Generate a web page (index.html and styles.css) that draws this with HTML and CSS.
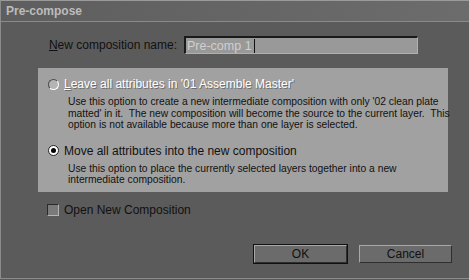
FILE: index.html
```html
<!DOCTYPE html>
<html lang="en">

<head>
    <meta charset="UTF-8">
    <title>Pre-compose</title>
    <link rel="stylesheet" href="styles.css">
</head>

<body>
    <div class="window">
        <div class="titlebar">Pre-compose</div>

        <div class="content">
            <div class="name-row">
                <label class="name-label"><u>N</u>ew composition name:</label>
                <div class="name-input">Pre-comp 1<span class="caret"></span></div>
            </div>

            <div class="panel">
                <div class="option">
                    <div class="option-head">
                        <span class="radio disabled"></span>
                        <span class="option-label disabled-text"><u>L</u>eave all attributes in '01 Assemble Master'</span>
                    </div>
                    <p class="option-desc">Use this option to create a new intermediate composition with only '02 clean plate<br>
                        matted' in it.&nbsp; The new composition will become the source to the current layer.&nbsp; This<br>
                        option is not available because more than one layer is selected.</p>
                </div>

                <div class="option second">
                    <div class="option-head">
                        <span class="radio checked"></span>
                        <span class="option-label">Move all attributes into the new composition</span>
                    </div>
                    <p class="option-desc">Use this option to place the currently selected layers together into a new<br>
                        intermediate composition.</p>
                </div>
            </div>

            <div class="check-row">
                <span class="checkbox"></span>
                <span class="check-label">Open New Composition</span>
            </div>

            <div class="buttons">
                <button class="btn default">OK</button>
                <button class="btn">Cancel</button>
            </div>
        </div>
    </div>
</body>

</html>
```

FILE: styles.css
```css
* {
    margin: 0;
    padding: 0;
    box-sizing: border-box;
    font-family: "Liberation Sans", Arial, sans-serif;
}

body {
    background-color: #5b5b5b;
    width: 469px;
    height: 280px;
    overflow: hidden;
}

.window {
    width: 469px;
    height: 279px;
    border-top: 1px solid #9a9a9a;
    border-left: 1px solid #8c8c8c;
    border-bottom: 1px solid #8c8c8c;
    background-color: #5b5b5b;
}

.titlebar {
    height: 21px;
    background: linear-gradient(to right, #5e5e5e, #6c6c6c);
    border-bottom: 1px solid #8a8a8a;
    color: #bcbcbc;
    font-weight: bold;
    font-size: 12px;
    padding-left: 5px;
    line-height: 20px;
}

.content {
    padding-top: 14px;
}

.name-row {
    display: flex;
    align-items: center;
    height: 18px;
}

.name-label {
    width: 178px;
    text-align: right;
    padding-right: 2px;
    font-size: 12px;
    color: #111;
}

.name-input {
    margin-left: 5px;
    width: 234px;
    height: 18px;
    background-color: #999;
    border-top: 2px solid #1a1a1a;
    border-left: 2px solid #1a1a1a;
    border-right: 1px solid #b0b0b0;
    border-bottom: 1px solid #b0b0b0;
    color: #cfcfcf;
    font-size: 12.5px;
    line-height: 14px;
    padding-left: 1px;
    display: flex;
    align-items: center;
}

.caret {
    display: inline-block;
    width: 1px;
    height: 14px;
    background-color: #111;
    margin-left: 2px;
}

.panel {
    margin-top: 14px;
    margin-left: 37px;
    width: 410px;
    height: 124px;
    background-color: #a1a1a1;
    padding: 10px 0 0 10px;
}

.option.second {
    margin-top: 14px;
}

.option-head {
    display: flex;
    align-items: center;
    height: 12px;
}

.option-label {
    margin-left: 5px;
    font-size: 12px;
    color: #111;
}

.disabled-text {
    color: #fff;
    text-shadow: 1px 1px 0 #6e6e6e;
}

.option-desc {
    margin-top: 6px;
    margin-left: 20px;
    white-space: nowrap;
    font-size: 10.3px;
    line-height: 11.5px;
    color: #111;
}

.radio {
    width: 11px;
    height: 11px;
    border-radius: 50%;
    flex-shrink: 0;
    position: relative;
}

.radio.disabled {
    background-color: #b4b4b4;
    border-top: 1px solid #4a4a4a;
    border-left: 1px solid #4a4a4a;
    border-right: 1px solid #fff;
    border-bottom: 1px solid #fff;
}

.radio.checked {
    background-color: #fff;
    border: 1px solid #222;
}

.radio.checked::after {
    content: "";
    position: absolute;
    left: 2px;
    top: 2px;
    width: 5px;
    height: 5px;
    border-radius: 50%;
    background-color: #000;
}

.check-row {
    display: flex;
    align-items: center;
    margin-top: 12px;
    margin-left: 46px;
    height: 12px;
}

.checkbox {
    width: 12px;
    height: 12px;
    background-color: #7a7a7a;
    border-top: 1px solid #2a2a2a;
    border-left: 1px solid #2a2a2a;
    border-right: 1px solid #b4b4b4;
    border-bottom: 1px solid #b4b4b4;
}

.check-label {
    margin-left: 5px;
    font-size: 12px;
    color: #111;
}

.buttons {
    display: flex;
    justify-content: flex-end;
    gap: 12px;
    margin-top: 29px;
    padding-right: 17px;
}

.btn {
    width: 93px;
    height: 18px;
    background-color: #6b6b6b;
    border-top: 1px solid #a8a8a8;
    border-left: 1px solid #a8a8a8;
    border-right: 1px solid #2e2e2e;
    border-bottom: 1px solid #2e2e2e;
    font-size: 12px;
    color: #111;
}

.btn.default {
    outline: 1px solid #111;
}
```
